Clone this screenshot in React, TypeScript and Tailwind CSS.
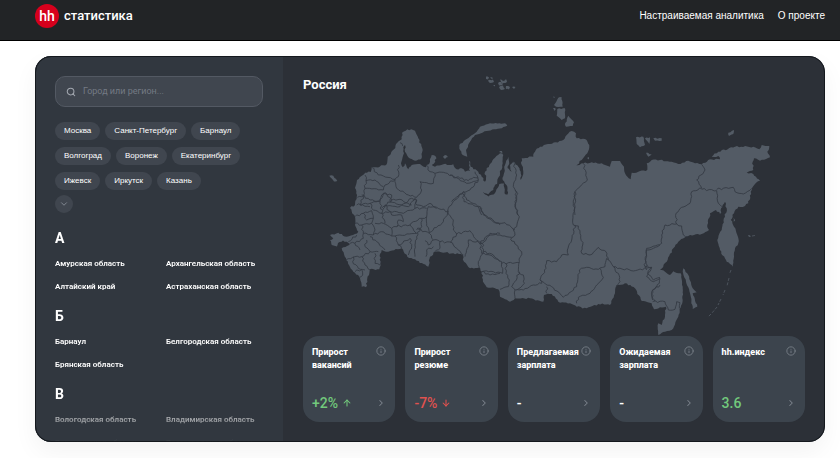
import { ArrowDown, ArrowUp, ChevronDown, ChevronRight, Info, Search } from "lucide-react";

type Point = [number, number];

const cityRows = [
  ["Москва", "Санкт-Петербург", "Барнаул"],
  ["Волгоград", "Воронеж", "Екатеринбург"],
  ["Ижевск", "Иркутск", "Казань"],
];

const sections = [
  { letter: "А", regions: ["Амурская область", "Архангельская область", "Алтайский край", "Астраханская область"] },
  { letter: "Б", regions: ["Барнаул", "Белгородская область", "Брянская область"] },
  { letter: "В", regions: ["Вологодская область", "Владимирская область", "Воронежская область", "Волгоградская область"] },
];

type Stat = { title: string; value: string; tone: string; trend?: "up" | "down" };

const stats: Stat[] = [
  { title: "Прирост вакансий", value: "+2%", tone: "text-[#72c97c]", trend: "up" },
  { title: "Прирост резюме", value: "-7%", tone: "text-[#e0524f]", trend: "down" },
  { title: "Предлагаемая зарплата", value: "-", tone: "text-white" },
  { title: "Ожидаемая зарплата", value: "-", tone: "text-white" },
  { title: "hh.индекс", value: "3.6", tone: "text-[#72c97c]" },
];

const mainland =
  "350,208 355,205 357,195 355,188 357,180 363,175 365,172.7 370.7,172 371.7,167.3 376,167.3 386.7,164.3 387.7,156.7 394,149.3 397.3,142.7 401.7,139.3 402,132.7 407.3,129.3 415,130.7 418.3,138.3 422.7,150 421.7,158.3 415,160.7 408.3,157.3 405,151.7 405,145 403.3,147 404,153.3 401,163.3 402.7,167.3 405,163.3 408.3,169.3 411.7,165 420,164 426,167.3 430,161.7 431.7,155 436,156.7 435.3,161.7 431.7,165 435,166.7 443.3,164.3 453.3,164.3 456.7,169.3 461.7,168.3 465,171.7 470,171 469,161.7 470,161 470.7,166.7 478.3,171.7 485,181.7 486,180 485,171.7 489.3,165 495,157.7 500,153.3 503.3,155 502.7,163.3 500,173.3 497.3,181.7 493.3,190 488.3,194.3 482.7,191.7 488.3,196.6 495,193 499.3,184 504,183.5 504.5,193.3 507.5,194.5 506.5,185 502.7,180 505,165 508.3,156.7 509.3,163.3 507.5,168 511.7,171.7 510,165 513.3,161.7 518.3,166.7 520.7,171.7 520.7,180 523.3,171.7 521.7,165 521.7,158.3 533.3,156.7 535,151.7 540,146.7 550,144 563.3,140 566.7,135 571.7,131 576,133.3 576.7,138.3 585,139 589.3,145 587.3,153.3 581.7,160 574,167.7 583.3,163.3 591.7,162.3 601.7,163.3 610,166.7 611.7,161 620,161 624,166.7 625,173.3 630.7,179.3 631.7,172.7 638.3,171.7 647.3,170 646.7,163.3 651.7,160 660,160 671.7,161.7 678.3,164 688.3,160.7 695,163.3 701.7,164.3 710,159.3 720,159.3 718.3,156 711.7,156.7 718.3,151.7 735,146.7 753.3,146.7 759.3,149.3 761.7,145 769.3,146 767.3,151.7 770,157.3 760,160.7 754,158.3 752.7,161.7 753.3,170 746.7,172.7 753.3,174 760,180.7 755,184 751.7,190 748.3,203.3 745,206 738.3,206.7 734,213.3 730.7,220 734,226.7 737.3,235 738.3,243.3 735,248.3 734,256.7 732.7,266.7 726.7,261.7 720,250 717.3,240 721.7,230 725,216.7 726.7,208.3 725,201.7 722.7,205 720,214 716,210 710,213.3 707.3,225 709,230 701.7,234 688.3,236 678.3,241.7 673.3,248.3 666.7,261.7 660,270 665,271.7 670,275 673.3,271.3 680.7,273.3 682.7,286.7 682.7,300 678.3,316.7 671.7,330 665,331.7 658.3,335 658.3,323.3 661.7,325 665,316.7 666,306.7 660,307.3 654,309.3 651.7,303.3 641.7,301 635,288.3 625,283.3 616.7,285 615,293.3 610,305 598.3,304 586.7,308.3 576.7,306.7 570,303.3 558.3,301.7 551.7,294 544,295 543.3,301.7 530,298.3 515,298.3 510,301.7 500,296.7 498.3,289.3 486.7,287.3 484,283.3 481.7,271.7 479.3,267.3 470,268.3 464,261.7 462.7,255 453.3,253.3 435,251.7 430,256.7 428.3,266.7 416.7,260.7 407.3,256.7 401.7,248.3 388.3,251.7 381.7,250 380,254 380.7,261.7 379.3,269.3 370,269.3 367.3,278.3 366,287.3 361.7,286.7 359.3,276.7 353.3,271.7 346,258.3 341.7,248.3 347,246 350,244 343,240.5 338,243 337,246.5 331.7,245 330,240 333.3,238.3 330,235 338.3,232.7 346.7,236.7 355,234 358.3,231.7 355,225 355,216.7";

const islands = [
  "329.3,175.7 333.3,175.7 337.3,181 334,181.5",
  "459.3,145 466.7,139 476.7,131.7 480,126.7 490,123.3 505,123.3 507.3,125.7 501.7,128.3 486.7,131 475,135 470,141.7 466,150 467.3,156.7 462.7,155 460,150",
  "558.3,97.7 561.7,97.3 562.7,106.7 556,106.7 554,105",
  "557.3,109 565,108.3 565,118.3 561.7,120 556.7,115.7",
  "566,126.7 565,125 568.3,115.7 574,122.3 572.7,126",
  "636,137.3 643.3,136.7 645,145 640,147.3 636.7,144",
  "645,138.3 650,137.3 649.3,144",
  "653.3,138.3 661.7,138.3 661.7,140.7 655,140.7",
  "646,152.7 651.7,154.3 648.3,156.7",
  "729,136 728.3,132.7 734,130 733.3,134",
  "683.3,268.3 688.3,275 692.7,288.3 696.7,292.3 692.7,293.3 697.3,306.7 692.7,309 690,293.3 686,281.7 682.7,271.7",
  "443,157 446,155 448,157 445,159",
  "553,96.5 555,97 554,98",
  "553,108 556,109 554,111",
  "499,152 502,151 502.5,153.5",
  "587,158 589,157 589,159.5",
  "486,76.5 489,77.5 488,79.5 486,79",
  "488,80.5 493,79.5 494,82 490,83",
  "500,79.5 503,81 506,79 507,82 502,84",
  "499,87 503,85.5 505,89 501,90",
  "506,86 510,87 509,89.5 506,89",
  "512,87 515.5,87 514,89",
  "490,77.5 493,78 492,79",
  "498,83 501,82 503,84.5 499,85.5",
  "493,85 495,85 495,86.5",
  "733.5,218 735,221 733.5,221.5",
  "748,235 751,236.5 749,237",
];

/* District borders, drawn at three units to the pixel. */
const westBorders = [
  "430,5 440,30 480,50 490,70 540,105",
  "430,5 405,30 385,55 382,65 400,90 400,120 410,132",
  "385,65 350,52 325,50 320,80 320,100 328,128 370,95 385,62",
  "410,132 450,122 470,150 487,160 510,135 540,130",
  "410,132 392,155 400,165 415,180 430,195",
  "487,160 445,150 445,170 435,200",
  "487,160 490,185 475,215 478,232",
  "490,185 520,195 540,215",
  "485,245 510,255 540,250",
  "328,130 335,145 360,155 360,175 345,185",
  "360,155 395,158",
  "300,115 290,140 285,165 285,200",
  "295,118 328,130",
  "315,152 325,165 340,150",
  "340,170 320,180 318,200",
  "110,45 150,40 180,30 185,15",
  "150,40 160,60 185,70 195,45 240,50 275,25 290,30 285,55 250,70 210,65 185,70",
  "185,15 200,12 215,30 240,28 275,45",
  "105,80 130,70 155,62",
  "130,70 140,90 160,85 155,62",
  "105,100 125,105 155,100 160,85",
  "125,105 130,130 160,135 165,120 155,100",
  "160,135 185,125 215,138 215,115 190,100 165,100",
  "185,70 195,100",
  "195,45 215,75 245,75",
  "215,115 230,110 235,90 250,95 245,75",
  "230,110 270,105 290,130 225,138 235,165 270,145",
  "225,138 215,138",
  "285,55 320,55",
  "320,80 305,85 280,95 270,105",
  "290,120 305,110 305,85",
  "105,160 130,145 130,130",
  "150,140 170,155 195,180",
  "140,150 135,170 150,185 175,185",
  "150,185 125,200 105,200 78,210",
  "100,200 98,215 115,235 135,240",
  "125,200 135,225 150,240",
  "165,190 165,220 180,225",
  "105,245 125,238 128,255 118,262",
  "90,160 105,160 120,180",
  "110,135 85,155",
  "270,145 275,170 265,195",
  "235,165 245,175",
];

const northWestBorders = [
  "155,172 175,195 190,198 225,208 230,235 265,255 290,262 305,240 300,215 340,220 345,190 370,187 420,205",
  "235,165 235,200 225,208",
  "318,165 330,185 345,190",
  "225,208 195,225 190,240 135,235 130,258 112,262",
  "135,235 138,212 165,210 190,230",
  "125,255 150,270 180,275 190,250",
  "185,300 180,275",
  "190,250 215,255 210,275 265,290 285,265",
  "215,270 185,295",
  "240,98 248,108",
  "135,195 138,212",
  "130,258 120,285 150,290",
  "285,265 290,285 310,290 330,280 350,295",
  "420,205 445,212 460,202 475,204",
];

const centreBorders = [
  "105,0 110,20 105,50 118,80 110,110 100,120 105,135 92,148 110,165 125,185 118,215 115,245 130,255 133,280 110,300",
  "285,5 285,50 278,90 280,105 295,108 300,130 308,165 305,190 330,195 355,172 378,185 385,210 400,230 460,243 515,232 503,250 520,270 540,262",
  "285,105 275,150 262,180 265,195 245,195 230,215 200,212 198,235 180,270 215,290 250,322 290,290 298,240 320,232 355,238 375,230 380,205 385,210",
  "290,340 295,322 330,310 350,285 370,262 360,235",
  "400,230 405,240 415,250 420,275 408,290",
  "180,270 185,280 160,285 130,300 105,300",
  "200,290 200,310",
  "0,50 10,75 50,100 75,98 105,120",
  "0,160 30,130 60,135 95,142",
  "0,160 5,190 30,195 65,215 68,250 40,245 5,245",
  "65,220 118,218",
  "78,220 78,250 88,270 85,290 60,298",
  "118,245 105,275 95,290 105,300 105,325",
  "500,240 498,205 500,180 520,175 540,165",
  "540,285 518,300 515,320 525,335",
];

const arcticBorders = [
  "190,290 200,330 190,365 203,385 195,410 203,450",
  "400,295 412,345 375,380 370,415 375,450",
  "0,330 50,355 85,345 75,320",
  "85,345 60,375 35,385 5,410",
  "38,385 42,410 85,425 95,450",
];

const eastBorders = [
  "105,440 110,385 155,370 155,345 165,315 200,312 215,318 220,345 235,350",
  "200,312 198,280 215,262 240,250 245,215 275,205 260,180 285,150 275,133",
  "275,208 320,212 325,250 340,262",
  "320,208 370,202 375,215 400,222 425,205",
  "105,440 125,442 110,470 130,485 150,475 148,490 125,515 128,540",
  "128,545 165,545 175,570 195,568 200,545 210,548 208,565",
];

/* Adds small zig-zags between the surveyed points so that lines read as coast or river. */
function roughen(source: string, amount: number, closed: boolean, step: number): string {
  const points = source.split(" ").map((pair) => pair.split(",").map(Number) as Point);
  const count = closed ? points.length : points.length - 1;
  const out: Point[] = [];
  let seed = 7;
  const next = () => {
    seed = (seed * 16807) % 2147483647;
    return seed / 2147483647 - 0.5;
  };
  for (let i = 0; i < count; i++) {
    const [ax, ay] = points[i];
    const [bx, by] = points[(i + 1) % points.length];
    const length = Math.hypot(bx - ax, by - ay) || 1;
    const parts = Math.max(1, Math.round(length / step));
    out.push([ax, ay]);
    for (let k = 1; k < parts; k++) {
      const t = k / parts;
      const shift = next() * amount;
      out.push([ax + (bx - ax) * t - ((by - ay) / length) * shift, ay + (by - ay) * t + ((bx - ax) / length) * shift]);
    }
  }
  if (!closed) out.push(points[points.length - 1]);
  return out.map(([x, y]) => `${x.toFixed(1)},${y.toFixed(1)}`).join(" ");
}

function Borders({ lines, x, y }: { lines: string[]; x: number; y: number }) {
  return (
    <g transform={`translate(${x} ${y}) scale(0.33333)`} fill="none" stroke="#343a43" strokeWidth="2.6" strokeLinejoin="round">
      {lines.map((line) => (
        <polyline key={line} points={roughen(line, 6, false, 7)} />
      ))}
    </g>
  );
}

function RussiaMap() {
  return (
    <svg viewBox="303 76 502 260" className="col-start-1 row-start-1 block w-full" role="img" aria-label="Карта России">
      <g fill="#535b65">
        <polygon points={roughen(mainland, 1.6, true, 2)} />
        {islands.map((island) => (
          <polygon key={island} points={roughen(island, 1, true, 2)} />
        ))}
      </g>
      <Borders lines={westBorders} x={320} y={190} />
      <Borders lines={northWestBorders} x={320} y={110} />
      <Borders lines={centreBorders} x={480} y={190} />
      <Borders lines={arcticBorders} x={450} y={65} />
      <Borders lines={eastBorders} x={610} y={120} />
      <path
        d="M731 270l-1.500 4M729 278l-2 8M725 290l-2 5M721 299l-3 6M717 307l-5 6M711 314l-3 3M752 236l3-.5"
        fill="none"
        stroke="#535b65"
        strokeWidth="0.8"
        strokeDasharray="3 1.500"
      />
    </svg>
  );
}

function StatCard({ title, value, tone, trend }: Stat) {
  return (
    <article className="flex h-[86px] flex-col justify-between rounded-[16px] bg-[#3c444d] px-[9px] pt-[10px] pb-[9px]">
      <div className="flex items-start justify-between">
        <h3 className="w-0 grow text-[9px] leading-[13px] font-extrabold text-white">{title}</h3>
        <button type="button" aria-label="Подробнее" className="text-[#7c838c]">
          <Info size={10} strokeWidth={2} />
        </button>
      </div>
      <div className="flex items-center justify-between">
        <p className={`flex items-center gap-1 text-[14px] leading-[20px] font-medium ${tone}`}>
          {value}
          {trend === "up" && <ArrowUp size={10} strokeWidth={2.5} />}
          {trend === "down" && <ArrowDown size={10} strokeWidth={2.5} />}
        </p>
        <button type="button" aria-label="Открыть" className="text-[#7c838c]">
          <ChevronRight size={10} strokeWidth={2.5} />
        </button>
      </div>
    </article>
  );
}

export default function App() {
  return (
    <div className="bg-white font-[Roboto,sans-serif]">
      <header className="flex items-center justify-between border-b border-black bg-[#222426] pt-1 pr-[15px] pb-3 pl-[35px]">
        <a href="#" className="flex items-center gap-[5px] text-white">
          <span className="flex size-6 items-center justify-center rounded-full bg-[#d6001c] text-[14px] font-medium">hh</span>
          <span className="text-[13px] font-medium">статистика</span>
        </a>
        <nav className="flex gap-[14px] pb-0.5 font-['Liberation_Sans',sans-serif] text-[10px] text-white">
          <a href="#">Настраиваемая аналитика</a>
          <a href="#">О проекте</a>
        </nav>
      </header>

      <main className="pt-[15px] pr-[15px] pb-4 pl-[35px]">
        <div className="flex overflow-hidden rounded-[16px] bg-[#2c3037] shadow-[0_10px_24px_rgba(0,0,0,0.05)] outline outline-[#14181d] -outline-offset-1">
          <aside className="h-0 min-h-[386px] w-[248px] shrink-0 overflow-hidden bg-[#31373f] px-5 pt-5">
            <label className="flex h-[31px] items-center gap-[7px] rounded-[10px] border border-[#535963] bg-[#40464f] px-[10px] text-[#a3a8b0]">
              <Search size={10} strokeWidth={2.5} />
              <input
                type="text"
                aria-label="Город или регион"
                placeholder="Город или регион..."
                className="w-0 grow bg-transparent text-[9px] text-white outline-none placeholder:text-[#747a84]"
              />
            </label>

            <div className="mt-[15px] flex flex-col gap-[7px] font-['Liberation_Sans',sans-serif]">
              {cityRows.map((row) => (
                <div key={row[0]} className="flex gap-[5px]">
                  {row.map((city) => (
                    <button key={city} type="button" className="h-[18px] rounded-full bg-[#40464f] px-[9px] text-[8px] text-white">
                      {city}
                    </button>
                  ))}
                </div>
              ))}
            </div>
            <button type="button" aria-label="Показать ещё" className="mt-[5px] flex size-[18px] items-center justify-center rounded-full bg-[#40464f] text-[#8d939c]">
              <ChevronDown size={10} strokeWidth={2} />
            </button>

            <div className="mt-[15px] flex h-[214px] flex-col gap-2 overflow-hidden mask-[linear-gradient(#000_80%,transparent)]">
              {sections.map(({ letter, regions }) => (
                <section key={letter}>
                  <h2 className="mb-1 text-[14px] leading-[20px] font-bold text-white">{letter}</h2>
                  <ul className="grid grid-cols-[111px_1fr] text-[8px] leading-[23px] font-semibold whitespace-nowrap text-white">
                    {regions.map((region) => (
                      <li key={region}>
                        <a href="#">{region}</a>
                      </li>
                    ))}
                  </ul>
                </section>
              ))}
            </div>
          </aside>

          <section className="min-w-0 grow p-5">
            <div className="grid">
              <RussiaMap />
              <h1 className="col-start-1 row-start-1 text-[13px] leading-[18px] font-bold text-white">Россия</h1>
            </div>
            <div className="grid grid-cols-5 gap-[10px]">
              {stats.map((stat) => (
                <StatCard key={stat.title} {...stat} />
              ))}
            </div>
          </section>
        </div>
      </main>
    </div>
  );
}
